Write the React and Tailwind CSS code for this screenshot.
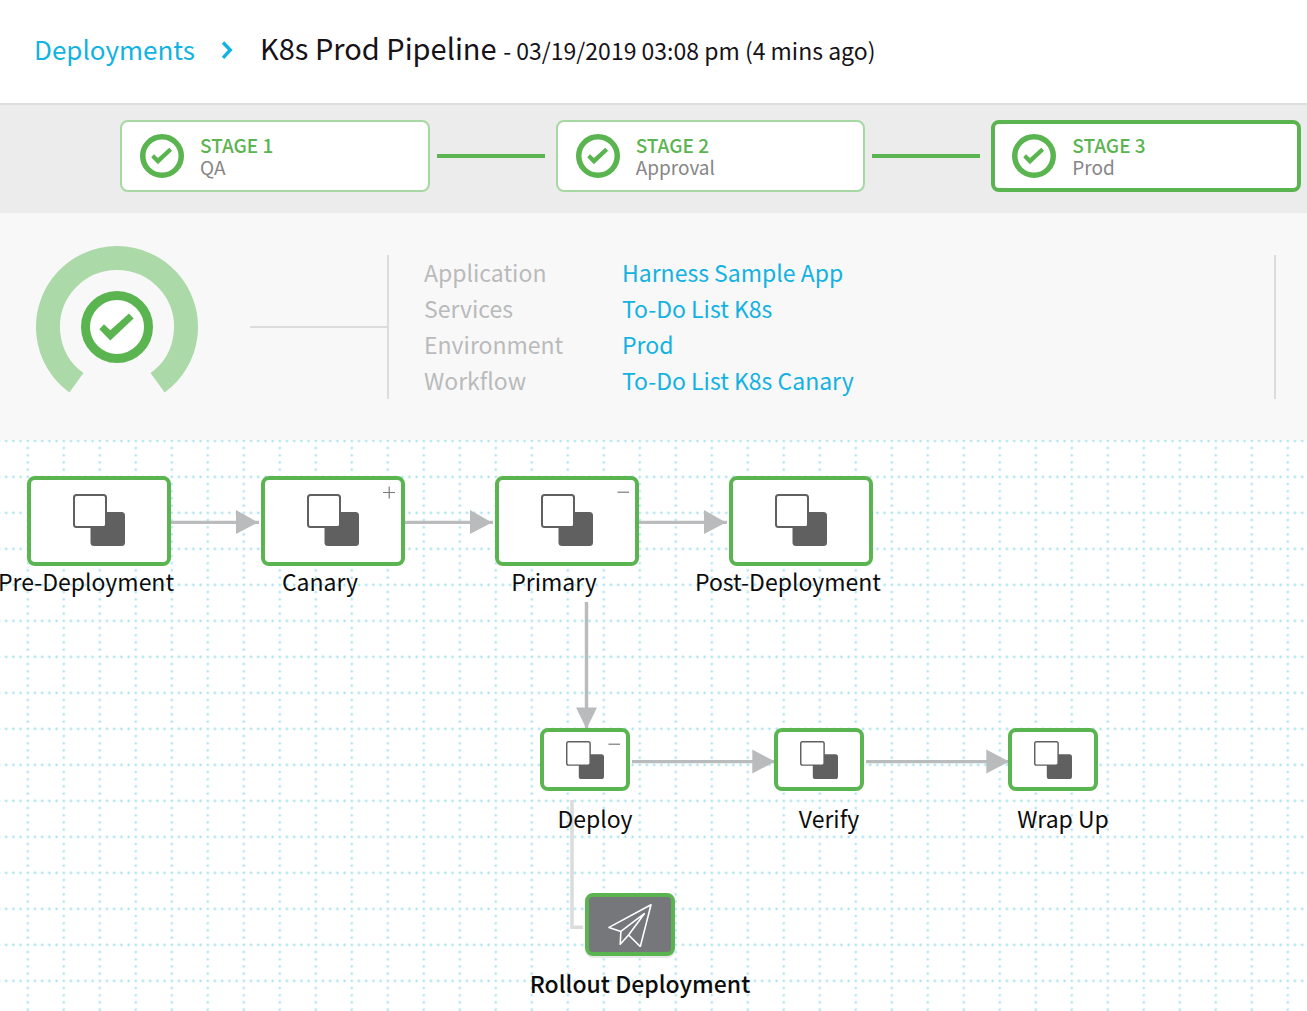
import React from "react";

const stages = [
  { title: "STAGE 1", name: "QA" },
  { title: "STAGE 2", name: "Approval" },
  { title: "STAGE 3", name: "Prod", active: true },
];

const details = [
  ["Application", "Harness Sample App"],
  ["Services", "To-Do List K8s"],
  ["Environment", "Prod"],
  ["Workflow", "To-Do List K8s Canary"],
];

const phases = [
  { label: "Pre-Deployment", pos: "left-[27px] top-[36px]" },
  { label: "Canary", pos: "left-[261px] top-[36px]", toggle: "+" },
  { label: "Primary", pos: "left-[495px] top-[36px]", toggle: "-" },
  { label: "Post-Deployment", pos: "left-[729px] top-[36px]" },
];

const steps = [
  { label: "Deploy", pos: "left-[540px] top-[288px]", toggle: "-" },
  { label: "Verify", pos: "left-[774px] top-[288px]" },
  { label: "Wrap Up", pos: "left-[1008px] top-[288px]" },
];

function Check({ className }) {
  return (
    <svg viewBox="0 0 72 72" className={className} aria-hidden="true">
      <circle cx="36" cy="36" r="31.5" fill="#fff" stroke="#5ab450" strokeWidth="9" />
      <path d="M18.3 38.2 23 33.2 29.3 39.2 48 22.5 52.6 27.5 29.3 49.5Z" fill="#5ab450" />
    </svg>
  );
}

function Squares({ className }) {
  return (
    <svg viewBox="0 0 52 52" className={className} aria-hidden="true">
      <rect x="17.5" y="18" width="34.5" height="34" rx="3.5" fill="#606060" />
      <rect x="1" y="1" width="32" height="32" rx="2.5" fill="#fff" stroke="#606060" strokeWidth="2" />
    </svg>
  );
}

function Toggle({ kind }) {
  return (
    <button
      type="button"
      aria-label={kind === "+" ? "Expand" : "Collapse"}
      className="absolute right-[5px] top-[5px] h-[14px] w-[14px]"
    >
      <svg viewBox="0 0 14 14" className="h-[14px] w-[14px]">
        <path d={kind === "+" ? "M1 7.5H13M7.2 1.5V13.5" : "M1.5 7.2H13"} stroke="#7a7a7a" strokeWidth="1.2" />
      </svg>
    </button>
  );
}

function PhaseNode({ label, pos, toggle }) {
  return (
    <div className={`absolute w-[144px] ${pos}`}>
      <div className="relative h-[90px] rounded-lg border-4 border-[#5ab450] bg-white pl-[42px] pt-[14px]">
        <Squares className="h-[52px] w-[52px]" />
        {toggle && <Toggle kind={toggle} />}
      </div>
      <div className="flex w-[118px] justify-center whitespace-nowrap text-[23px] leading-[30px] text-[#0c0c0c]">
        {label}
      </div>
    </div>
  );
}

function StepNode({ label, pos, toggle }) {
  return (
    <div className={`absolute w-[90px] ${pos}`}>
      <div className="relative h-[63px] rounded-lg border-4 border-[#5ab450] bg-white pl-[22px] pt-[9px]">
        <Squares className="h-[38px] w-[38px]" />
        {toggle && <Toggle kind={toggle} />}
      </div>
      <div className="ml-5 mt-3 flex w-[70px] justify-center whitespace-nowrap text-[23px] leading-[30px] text-[#0c0c0c]">
        {label}
      </div>
    </div>
  );
}

const dots = [0, 7.2, 14.4, 21.6, 28.8];

function Grid() {
  return (
    <svg className="absolute inset-0 h-full w-full" aria-hidden="true">
      <defs>
        <pattern id="dots" x="26.6" y="-0.4" width="36" height="36" patternUnits="userSpaceOnUse">
          {dots.map((d) => (
            <circle key={`h${d}`} cx={d + 1.2} cy="1.2" r="1.2" fill="#a2e0ee" />
          ))}
          {dots.slice(1).map((d) => (
            <circle key={`v${d}`} cx="1.2" cy={d + 1.2} r="1.2" fill="#a2e0ee" />
          ))}
        </pattern>
      </defs>
      <rect width="100%" height="100%" fill="url(#dots)" />
    </svg>
  );
}

function Connectors() {
  return (
    <svg className="absolute left-0 top-0 h-[571px] w-[1307px]" viewBox="0 0 1307 571" aria-hidden="true">
      <g stroke="#b9bbbd" strokeWidth="3.4" fill="none">
        <path d="M169 82.4H259M403 82.4H493M637 82.4H727" />
        <path d="M586.5 162V288M632 321.6H775M866 321.6H1009" />
      </g>
      <g fill="#b9bbbd">
        <path d="M236 70V94L258 82.4ZM470 70V94L492 82.4ZM704 70V94L726 82.4Z" />
        <path d="M576 267.5H597L586.5 289ZM752.3 309.5V333.5L775 321.6ZM986.3 309.5V333.5L1009 321.6Z" />
      </g>
      <path d="M572 360V487.3H583" stroke="#dcdcdc" strokeWidth="3.6" fill="none" />
    </svg>
  );
}

export default function App() {
  return (
    <div className="flex min-h-screen flex-col overflow-x-hidden bg-white font-['Noto_Sans_CJK_SC','Noto_Sans',sans-serif]">
      <header className="flex h-[105px] items-center border-b-2 border-[#dedede] pb-1.5 pl-[34px]">
        <nav aria-label="Breadcrumb" className="flex items-baseline whitespace-nowrap">
          <a href="#deployments" className="text-[26px] leading-[36px] text-[#12b2e1]">
            Deployments
          </a>
          <svg viewBox="0 0 12 20" className="ml-[26px] mr-[27px] h-5 w-3" aria-hidden="true">
            <path d="M2 2.5 9.3 10 2 17.8" fill="none" stroke="#12b2e1" strokeWidth="3.4" />
          </svg>
          <h1 className="text-[29px] leading-[36px] text-[#161218]">
            K8s Prod Pipeline <span className="text-[23px]">- 03/19/2019 03:08 pm (4 mins ago)</span>
          </h1>
        </nav>
      </header>

      <section aria-label="Stages" className="flex items-center bg-[#ececec] pb-[21px] pl-[120px] pr-[6px] pt-[15px]">
        {stages.map((s, i) => (
          <React.Fragment key={s.title}>
            {i > 0 && <div className="ml-[7px] mr-[11px] h-1 w-[108px] shrink-0 bg-[#5ab450]" />}
            <button
              type="button"
              className={
                s.active
                  ? "flex h-[72px] grow basis-40 items-center rounded-lg border-4 border-[#5ab450] bg-white pl-[17px] text-left"
                  : "flex h-[72px] grow basis-40 items-center rounded-lg border-2 border-[#a6d8a1] bg-white pl-[18px] text-left"
              }
            >
              <Check className="h-11 w-11 shrink-0" />
              <span className="ml-4 flex flex-col text-[19px] leading-[22px]">
                <span className="font-medium text-[#5ab450]">{s.title}</span>
                <span className="text-[#868686]">{s.name}</span>
              </span>
            </button>
          </React.Fragment>
        ))}
      </section>

      <section aria-label="Deployment details" className="flex items-center bg-[#f8f8f8] pb-[41px] pl-[36px] pr-[31px] pt-[42px]">
        <div className="relative -my-5 h-[162px] w-[162px] shrink-0">
          <svg viewBox="0 0 162 162" className="h-[162px] w-[162px]" aria-hidden="true">
            <path d="M40.4 136.8A69 69 0 1 1 121.6 136.8" fill="none" stroke="#abd9a7" strokeWidth="24" />
          </svg>
          <Check className="absolute left-[45px] top-[45px] h-[72px] w-[72px]" />
        </div>
        <div className="ml-[52px] h-[2px] w-[137px] shrink-0 bg-[#dcdcdc]" />
        <dl className="h-36 flex-1 border-x-2 border-[#dcdcdc] pl-[35px] text-[23px] leading-[34px]">
          {details.map(([k, v]) => (
            <div key={k} className="mb-0.5 flex">
              <dt className="w-[198px] text-[#b9babb]">{k}</dt>
              <dd>
                <a href="#details" className="text-[#12b2e1]">
                  {v}
                </a>
              </dd>
            </div>
          ))}
        </dl>
      </section>

      <main className="relative min-h-[571px] flex-1 overflow-hidden">
        <Grid />
        <Connectors />
        {phases.map((p) => (
          <PhaseNode key={p.label} {...p} />
        ))}
        {steps.map((s) => (
          <StepNode key={s.label} {...s} />
        ))}
        <div className="absolute left-[585px] top-[453px] w-[90px]">
          <div className="h-[63px] rounded-lg border-4 border-[#5ab450] bg-[#76777a] pl-[19px] pt-[6px] shadow-[0_2px_1px_#e8e8e8]">
            <svg viewBox="0 0 44 44" className="h-11 w-11" fill="none" stroke="#fff" strokeWidth="1.6" strokeLinejoin="round" aria-hidden="true">
              <path d="M1 24.4 43 1.8 32.3 43.6 20.6 32 12.2 41.2 12.9 28.4Z" />
              <path d="M12.9 28.4 36.3 10.7 20.6 32" />
            </svg>
          </div>
          <div className="ml-5 mt-3 flex w-[70px] justify-center whitespace-nowrap text-[23px] font-medium leading-[30px] text-[#0c0c0c]">
            Rollout Deployment
          </div>
        </div>
      </main>
    </div>
  );
}
